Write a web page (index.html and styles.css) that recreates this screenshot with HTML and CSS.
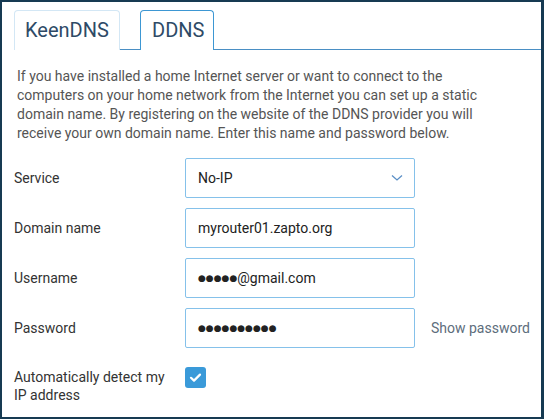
FILE: index.html
```html
<!DOCTYPE html>
<html>
<head>
<meta charset="utf-8">
<link rel="stylesheet" href="styles.css">
</head>
<body>
<div class="frame">
  <div class="tabs">
    <div class="tab">KeenDNS</div>
    <div class="tab active">DDNS</div>
  </div>
  <p class="desc">If you have installed a home Internet server or want to connect to the computers on your home network from the Internet you can set up a static domain name. By registering on the website of the DDNS provider you will receive your own domain name. Enter this name and password below.</p>
  <div class="form">
    <div class="row">
      <div class="label">Service</div>
      <div class="field select">
        <span>No-IP</span>
        <svg class="chev" width="12" height="8" viewBox="0 0 12 8"><path d="M1 1.5 L6 6 L11 1.5" fill="none" stroke="#5b8fc6" stroke-width="1.3"/></svg>
      </div>
    </div>
    <div class="row">
      <div class="label">Domain name</div>
      <div class="field">myrouter01.zapto.org</div>
    </div>
    <div class="row">
      <div class="label">Username</div>
      <div class="field"><span class="dots">●●●●●</span>@gmail.com</div>
    </div>
    <div class="row">
      <div class="label">Password</div>
      <div class="field"><span class="dots">●●●●●●●●●●</span></div>
      <div class="show">Show password</div>
    </div>
    <div class="row check-row">
      <div class="label two">Automatically detect my IP address</div>
      <div class="checkbox">
        <svg width="21" height="21" viewBox="0 0 21 21"><path d="M6 10.8 L9 13.6 L15 7.6" fill="none" stroke="#fff" stroke-width="2.2" stroke-linecap="round" stroke-linejoin="round"/></svg>
      </div>
    </div>
  </div>
</div>
</body>
</html>
```
FILE: styles.css
```css
* { box-sizing: border-box; }
html, body { margin: 0; padding: 0; }
body {
  font-family: Roboto, "Liberation Sans", sans-serif;
  background: #fff;
}
.frame {
  width: 544px;
  height: 419px;
  border-style: solid;
  border-color: #163a52;
  border-width: 2px 3px 2px 2px;
  padding: 8px 0 0 12px;
  overflow: hidden;
}
.tabs {
  display: flex;
  gap: 20px;
  border-bottom: 1px solid #4a8fc4;
  height: 40px;
}
.tab {
  height: 40px;
  padding: 0 11px;
  font-size: 20px;
  line-height: 38px;
  color: #2e4a66;
  border: 1px solid #d3e7f5;
  border-bottom: none;
  border-radius: 4px 4px 0 0;
  background: #fff;
}
.tab.active {
  border-color: #3d97d3;
  margin-bottom: -1px;
}
.tab:first-child { width: 106px; padding-left: 10px; }
.tab.active { width: 74px; }
.desc {
  margin: 17px 0 0 3px;
  font-size: 14px;
  line-height: 19px;
  color: #555;
  width: 462px;
}
.form {
  margin-top: 15px;
  display: flex;
  flex-direction: column;
  gap: 10px;
}
.row {
  display: flex;
  align-items: center;
  height: 40px;
}
.label {
  width: 171px;
  padding-right: 12px;
  font-size: 14px;
  color: #333;
}
.field {
  width: 230px;
  height: 40px;
  border: 1px solid #85c1ea;
  border-radius: 2px;
  padding: 0 12px;
  display: flex;
  align-items: center;
  font-size: 14px;
  color: #222;
}
.select { justify-content: space-between; padding-right: 11px; }
.dots { font-family: "DejaVu Sans", sans-serif; font-size: 9px; letter-spacing: 0; }
.show {
  margin-left: 16px;
  font-size: 14px;
  color: #5d6d7c;
}
.check-row { height: auto; align-items: flex-start; margin-top: 9px; }
.label.two { line-height: 18px; margin-top: 1px; }
.checkbox {
  width: 21px;
  height: 21px;
  border-radius: 3px;
  background: #3a9ad9;
  display: flex;
}
```
